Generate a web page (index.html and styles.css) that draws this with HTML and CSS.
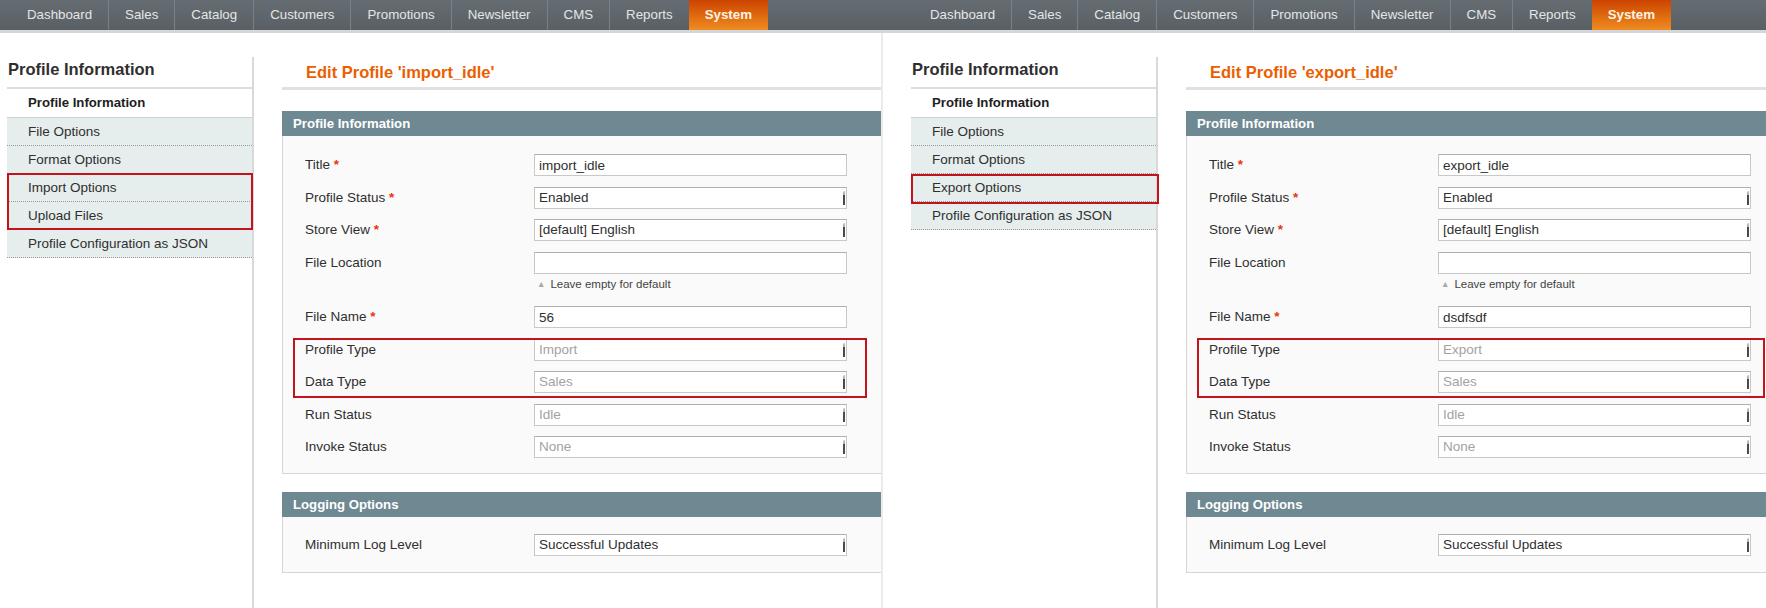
FILE: index.html
```html
<!DOCTYPE html>
<html lang="en">
<head>
    <meta charset="UTF-8">
    <title>Import / Export Profiles</title>
    <link rel="stylesheet" href="styles.css">
</head>
<body>

<div class="screens">

    <!-- Import profile -->
    <div class="shot shot-import">
        <div class="topnav">
            <span class="nav-item">Dashboard</span>
            <span class="nav-item">Sales</span>
            <span class="nav-item">Catalog</span>
            <span class="nav-item">Customers</span>
            <span class="nav-item">Promotions</span>
            <span class="nav-item">Newsletter</span>
            <span class="nav-item">CMS</span>
            <span class="nav-item">Reports</span>
            <span class="nav-item current">System</span>
        </div>
        <div class="main">
            <div class="sidebar">
                <div class="side-title">Profile Information</div>
                <div class="tab active">Profile Information</div>
                <div class="tab-list">
                    <div class="tab">File Options</div>
                    <div class="tab">Format Options</div>
                    <div class="mark mark-tabs">
                        <div class="tab">Import Options</div>
                        <div class="tab">Upload Files</div>
                    </div>
                    <div class="tab">Profile Configuration as JSON</div>
                </div>
            </div>
            <div class="content">
                <h3 class="page-title">Edit Profile 'import_idle'</h3>
                <div class="section">
                    <div class="section-head">Profile Information</div>
                    <div class="section-body">
                        <div class="row"><label>Title <span class="req">*</span></label><div class="field"><input class="input" type="text" value="import_idle"></div></div>
                        <div class="row"><label>Profile Status <span class="req">*</span></label><div class="field"><div class="select">Enabled</div></div></div>
                        <div class="row"><label>Store View <span class="req">*</span></label><div class="field"><div class="select">[default] English</div></div></div>
                        <div class="row"><label>File Location</label><div class="field"><input class="input" type="text" value=""><div class="note"><span class="tri">&#9650;</span>Leave empty for default</div></div></div>
                        <div class="row"><label>File Name <span class="req">*</span></label><div class="field"><input class="input" type="text" value="56"></div></div>
                        <div class="mark mark-rows">
                            <div class="row"><label>Profile Type</label><div class="field"><div class="select disabled">Import</div></div></div>
                            <div class="row"><label>Data Type</label><div class="field"><div class="select disabled">Sales</div></div></div>
                        </div>
                        <div class="row"><label>Run Status</label><div class="field"><div class="select disabled">Idle</div></div></div>
                        <div class="row"><label>Invoke Status</label><div class="field"><div class="select disabled">None</div></div></div>
                    </div>
                </div>
                <div class="section">
                    <div class="section-head">Logging Options</div>
                    <div class="section-body compact">
                        <div class="row"><label>Minimum Log Level</label><div class="field"><div class="select">Successful Updates</div></div></div>
                    </div>
                </div>
            </div>
        </div>
    </div>

    <!-- Export profile -->
    <div class="shot shot-export">
        <div class="topnav">
            <span class="nav-item">Dashboard</span>
            <span class="nav-item">Sales</span>
            <span class="nav-item">Catalog</span>
            <span class="nav-item">Customers</span>
            <span class="nav-item">Promotions</span>
            <span class="nav-item">Newsletter</span>
            <span class="nav-item">CMS</span>
            <span class="nav-item">Reports</span>
            <span class="nav-item current">System</span>
        </div>
        <div class="main">
            <div class="sidebar">
                <div class="side-title">Profile Information</div>
                <div class="tab active">Profile Information</div>
                <div class="tab-list">
                    <div class="tab">File Options</div>
                    <div class="tab">Format Options</div>
                    <div class="mark mark-tab">
                        <div class="tab">Export Options</div>
                    </div>
                    <div class="tab">Profile Configuration as JSON</div>
                </div>
            </div>
            <div class="content">
                <h3 class="page-title">Edit Profile 'export_idle'</h3>
                <div class="section">
                    <div class="section-head">Profile Information</div>
                    <div class="section-body">
                        <div class="row"><label>Title <span class="req">*</span></label><div class="field"><input class="input" type="text" value="export_idle"></div></div>
                        <div class="row"><label>Profile Status <span class="req">*</span></label><div class="field"><div class="select">Enabled</div></div></div>
                        <div class="row"><label>Store View <span class="req">*</span></label><div class="field"><div class="select">[default] English</div></div></div>
                        <div class="row"><label>File Location</label><div class="field"><input class="input" type="text" value=""><div class="note"><span class="tri">&#9650;</span>Leave empty for default</div></div></div>
                        <div class="row"><label>File Name <span class="req">*</span></label><div class="field"><input class="input" type="text" value="dsdfsdf"></div></div>
                        <div class="mark mark-rows">
                            <div class="row"><label>Profile Type</label><div class="field"><div class="select disabled">Export</div></div></div>
                            <div class="row"><label>Data Type</label><div class="field"><div class="select disabled">Sales</div></div></div>
                        </div>
                        <div class="row"><label>Run Status</label><div class="field"><div class="select disabled">Idle</div></div></div>
                        <div class="row"><label>Invoke Status</label><div class="field"><div class="select disabled">None</div></div></div>
                    </div>
                </div>
                <div class="section">
                    <div class="section-head">Logging Options</div>
                    <div class="section-body compact">
                        <div class="row"><label>Minimum Log Level</label><div class="field"><div class="select">Successful Updates</div></div></div>
                    </div>
                </div>
            </div>
        </div>
    </div>

</div>

</body>
</html>
```

FILE: styles.css
```css
body {
    margin: 0;
    font-family: "Liberation Sans", Arial, sans-serif;
    font-size: 13.5px;
    color: #2f2f2f;
    background: #fff;
}
.screens {
    display: flex;
    height: 608px;
    overflow: hidden;
}
.shot {
    height: 608px;
    overflow: hidden;
}
.shot-import {
    width: 881px;
    flex: none;
}
.shot-export {
    flex: 1;
    min-width: 0;
}

/* top menu */
.topnav {
    display: flex;
    height: 30px;
    padding-left: 11px;
    background: linear-gradient(#666d72, #596065);
    border-bottom: 3px solid #d3d7d9;
    white-space: nowrap;
}
.shot-export .topnav {
    padding-left: 33px;
}
.nav-item {
    padding: 0 16px;
    line-height: 30px;
    font-size: 13.3px;
    color: #e2e6e8;
    border-left: 1px solid #7a8186;
}
.nav-item:first-child {
    border-left: none;
}
.nav-item.current {
    border-left: none;
    background: linear-gradient(#cc4400, #ef8c20);
    color: #fff3e4;
    font-weight: bold;
}

.main {
    display: flex;
    height: 575px;
    padding-top: 24px;
    padding-left: 7px;
    box-sizing: border-box;
}
.shot-export .main {
    padding-left: 28px;
    border-left: 2px solid #ebebeb;
}

/* left tabs */
.sidebar {
    width: 245px;
    flex: none;
    margin-right: 28px;
    border-right: 2px solid #d9d9d9;
}
.side-title {
    height: 30px;
    line-height: 24px;
    padding-left: 1px;
    font-size: 16.5px;
    font-weight: bold;
    color: #2f2f2f;
    border-bottom: 2px solid #dedede;
}
.tab {
    height: 27px;
    line-height: 27px;
    padding-left: 21px;
    white-space: nowrap;
    border-bottom: 1px dotted #9a9a9a;
}
.tab.active {
    height: 28px;
    line-height: 28px;
    border-bottom: none;
    font-size: 13.2px;
    font-weight: bold;
    color: #1e1e1e;
}
.tab-list {
    background: #e6eded;
    border-top: 1px solid #c9d1d1;
}

/* red annotation frames */
.mark {
    position: relative;
}
.mark::after {
    content: "";
    position: absolute;
    border: 2px solid #c3141c;
    pointer-events: none;
}
.mark-tabs::after {
    top: -1px;
    left: 0;
    right: -1px;
    bottom: 0;
}
.mark-tab::after {
    top: 0;
    left: 0;
    right: -3px;
    bottom: -2px;
}
.mark-rows {
    display: flex;
    flex-direction: column;
    gap: 10.5px;
    width: 542px;
}
.mark-rows::after {
    top: -1px;
    left: -12px;
    right: -20px;
    bottom: -5px;
}
.shot-export .mark-rows::after {
    right: -14px;
}

/* form */
.content {
    width: 620px;
    flex: none;
}
.page-title {
    margin: 0 0 21px;
    height: 30px;
    line-height: 30px;
    padding-left: 24px;
    font-size: 16.5px;
    color: #eb5e00;
    border-bottom: 3px solid #e1e1e1;
    white-space: nowrap;
}
.section {
    margin-bottom: 18px;
}
.section-head {
    height: 25px;
    line-height: 25px;
    padding-left: 11px;
    background: #6f8992;
    color: #fff;
    font-size: 13.2px;
    font-weight: bold;
}
.section-body {
    display: flex;
    flex-direction: column;
    gap: 10.5px;
    padding: 18px 0 15px 22px;
    background: #fafafa;
    border: 1px solid #d6d6d6;
    border-top: none;
}
.section-body.compact {
    padding-top: 17px;
    padding-bottom: 16px;
}
.row {
    display: flex;
    align-items: flex-start;
}
.row label {
    width: 229px;
    flex: none;
    line-height: 22px;
    white-space: nowrap;
}
.req {
    color: #eb340a;
    font-weight: bold;
}
.field {
    width: 313px;
    flex: none;
}
.input, .select {
    display: block;
    box-sizing: border-box;
    width: 313px;
    height: 22px;
    margin: 0;
    padding: 0 4px;
    line-height: 20px;
    font-family: "Liberation Sans", Arial, sans-serif;
    font-size: 13.5px;
    color: #2f2f2f;
    background: #fff;
    border: 1px solid #c8c8c8;
    border-top-color: #aeaeae;
    outline: none;
}
.select {
    position: relative;
}
.select::after {
    content: "";
    position: absolute;
    right: 1px;
    top: 3px;
    width: 2px;
    height: 14px;
    background: linear-gradient(#b5b5b5 0 4px, #4a4a4a 4px);
    border-top-left-radius: 2px;
}
.select.disabled {
    color: #a2a2a2;
}
.note {
    height: 22px;
    line-height: 20px;
    padding-left: 3px;
    font-size: 11.5px;
    color: #444;
}
.tri {
    font-size: 8.5px;
    color: #a8a8a8;
    margin-right: 5px;
    vertical-align: 1px;
}
```
